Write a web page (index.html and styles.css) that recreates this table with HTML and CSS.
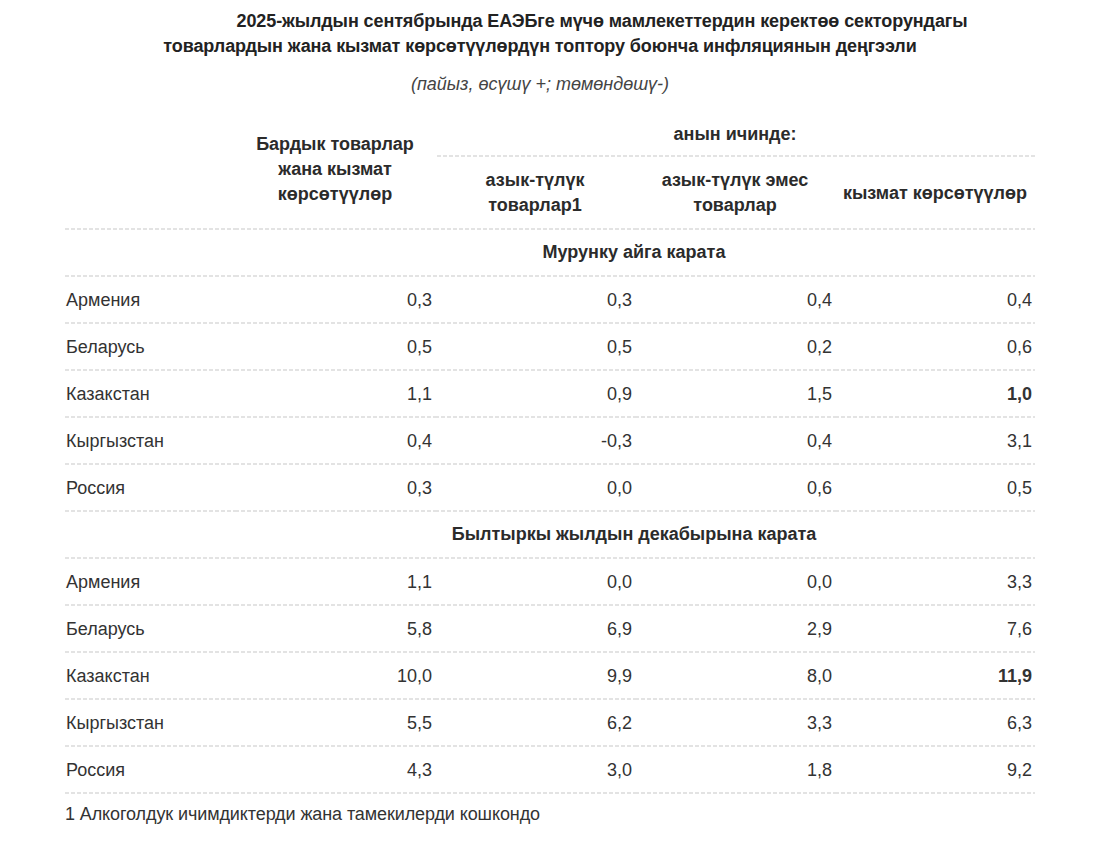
FILE: index.html
```html
<!DOCTYPE html>
<html lang="ky">
<head>
<meta charset="utf-8">
<title>Инфляциянын деңгээли</title>
<link rel="stylesheet" href="styles.css">
</head>
<body>
<div class="page">
  <h1 class="title">2025-жылдын сентябрында ЕАЭБге мүчө мамлекеттердин керектөө секторундагы<br>товарлардын жана кызмат көрсөтүүлөрдүн топтору боюнча инфляциянын деңгээли</h1>
  <p class="subtitle">(пайыз, өсүшү +; төмөндөшү-)</p>
  <table class="data">
    <colgroup>
      <col class="c-name">
      <col class="c-val">
      <col class="c-val">
      <col class="c-val">
      <col class="c-val">
    </colgroup>
    <thead>
      <tr>
        <th rowspan="2" class="h-empty"></th>
        <th rowspan="2" class="h-all">Бардык товарлар<br>жана кызмат<br>көрсөтүүлөр</th>
        <th colspan="3" class="h-group">анын ичинде:</th>
      </tr>
      <tr>
        <th class="h-sub">азык-түлүк<br>товарлар1</th>
        <th class="h-sub">азык-түлүк эмес<br>товарлар</th>
        <th class="h-sub">кызмат көрсөтүүлөр</th>
      </tr>
    </thead>
    <tbody>
      <tr class="section"><td></td><td colspan="4">Мурунку айга карата</td></tr>
      <tr><td>Армения</td><td>0,3</td><td>0,3</td><td>0,4</td><td>0,4</td></tr>
      <tr><td>Беларусь</td><td>0,5</td><td>0,5</td><td>0,2</td><td>0,6</td></tr>
      <tr><td>Казакстан</td><td>1,1</td><td>0,9</td><td>1,5</td><td class="strong">1,0</td></tr>
      <tr><td>Кыргызстан</td><td>0,4</td><td>-0,3</td><td>0,4</td><td>3,1</td></tr>
      <tr><td>Россия</td><td>0,3</td><td>0,0</td><td>0,6</td><td>0,5</td></tr>
      <tr class="section"><td></td><td colspan="4">Былтыркы жылдын декабырына карата</td></tr>
      <tr><td>Армения</td><td>1,1</td><td>0,0</td><td>0,0</td><td>3,3</td></tr>
      <tr><td>Беларусь</td><td>5,8</td><td>6,9</td><td>2,9</td><td>7,6</td></tr>
      <tr><td>Казакстан</td><td>10,0</td><td>9,9</td><td>8,0</td><td class="strong">11,9</td></tr>
      <tr><td>Кыргызстан</td><td>5,5</td><td>6,2</td><td>3,3</td><td>6,3</td></tr>
      <tr><td>Россия</td><td>4,3</td><td>3,0</td><td>1,8</td><td>9,2</td></tr>
    </tbody>
  </table>
  <p class="footnote">1 Алкоголдук ичимдиктерди жана тамекилерди кошкондо</p>
</div>
</body>
</html>
```

FILE: styles.css
```css
html, body {
  margin: 0;
  padding: 0;
  background: #ffffff;
}

body {
  font-family: "Liberation Sans", Arial, sans-serif;
  font-size: 18px;
  color: #333333;
}

.page {
  width: 970px;
  padding: 9px 0 0 65px;
}

.title {
  margin: 0;
  padding-right: 20px;
  font-size: 18px;
  font-weight: bold;
  line-height: 25px;
  letter-spacing: -0.1px;
  text-align: center;
  text-indent: 124px;
  color: #222222;
}

.subtitle {
  margin: 13px 0 0;
  padding-right: 20px;
  font-style: italic;
  line-height: 25px;
  text-align: center;
  color: #444444;
}

.data {
  width: 970px;
  margin-top: 19px;
  border-collapse: collapse;
  table-layout: fixed;
}

.c-name { width: 170px; }
.c-val { width: 200px; }

.data th,
.data td {
  padding: 0;
  background-image: linear-gradient(to right, #e3e3e3 4px, transparent 4px);
  background-size: 6px 2px;
  background-repeat: repeat-x;
  background-position: left bottom;
}

.data th {
  font-weight: bold;
  line-height: 25px;
  text-align: center;
  color: #2b2b2b;
}

.data .h-empty,
.data .h-all {
  padding: 0 3px 7px;
  vertical-align: middle;
}

.data .h-group {
  padding: 6px 3px 10px;
  background-position: 2px bottom;
}

.data .h-sub {
  padding: 11px 3px 12px;
  vertical-align: middle;
}

.data td {
  padding: 13px 3px 13px 1px;
  line-height: 21px;
  text-align: right;
  vertical-align: middle;
}

.data td:first-child {
  text-align: left;
}

.data td.strong {
  font-weight: bold;
}

.data tr.section td {
  padding-top: 12px;
  padding-bottom: 14px;
  font-weight: bold;
  text-align: center;
  color: #2b2b2b;
}

.footnote {
  margin: 10px 0 0;
  line-height: 21px;
  letter-spacing: -0.1px;
}
```
